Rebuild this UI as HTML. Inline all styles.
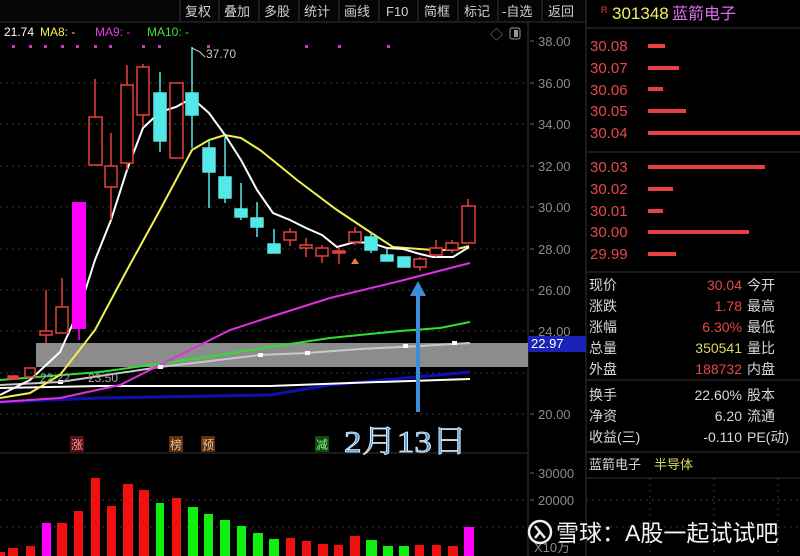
<!DOCTYPE html>
<html><head><meta charset="utf-8"><style>
*{margin:0;padding:0}
body{width:800px;height:556px;background:#000;overflow:hidden;position:relative;font-family:"Liberation Sans","Noto Sans CJK SC",sans-serif}
</style></head><body>
<svg width="800" height="556" style="position:absolute;left:0;top:0" font-family="Liberation Sans, Noto Sans CJK SC, sans-serif">
<rect x="0" y="0" width="586" height="22" fill="#050505"/>
<g fill="#cfcfcf" font-size="13">
<text x="185" y="16">复权</text><text x="224" y="16">叠加</text><text x="264" y="16">多股</text><text x="304" y="16">统计</text><text x="344" y="16">画线</text><text x="386" y="16">F10</text><text x="424" y="16">简框</text><text x="464" y="16">标记</text><text x="502" y="16">-自选</text><text x="548" y="16">返回</text>
</g>
<g stroke="#333" stroke-width="1">
<line x1="180" y1="0" x2="180" y2="22"/><line x1="219" y1="0" x2="219" y2="22"/><line x1="259" y1="0" x2="259" y2="22"/><line x1="299" y1="0" x2="299" y2="22"/><line x1="339" y1="0" x2="339" y2="22"/><line x1="379" y1="0" x2="379" y2="22"/><line x1="418" y1="0" x2="418" y2="22"/><line x1="458" y1="0" x2="458" y2="22"/><line x1="498" y1="0" x2="498" y2="22"/><line x1="542" y1="0" x2="542" y2="22"/>
<line x1="0" y1="22" x2="586" y2="22"/>
<line x1="528" y1="22" x2="528" y2="556"/>
<line x1="586" y1="0" x2="586" y2="556"/>
<line x1="0" y1="453" x2="528" y2="453"/>
<line x1="586" y1="28" x2="800" y2="28"/><line x1="586" y1="152" x2="800" y2="152"/><line x1="586" y1="272" x2="800" y2="272"/><line x1="586" y1="380" x2="800" y2="380"/><line x1="586" y1="452" x2="800" y2="452"/><line x1="586" y1="478" x2="800" y2="478"/>
</g>
<g stroke="#3a3a3a" stroke-dasharray="2,4">
<line x1="0" y1="83" x2="528" y2="83"/><line x1="0" y1="124" x2="528" y2="124"/><line x1="0" y1="166" x2="528" y2="166"/><line x1="0" y1="207" x2="528" y2="207"/><line x1="0" y1="249" x2="528" y2="249"/><line x1="0" y1="290" x2="528" y2="290"/><line x1="0" y1="331" x2="528" y2="331"/><line x1="0" y1="373" x2="528" y2="373"/><line x1="0" y1="414" x2="528" y2="414"/>
<line x1="0" y1="500" x2="528" y2="500"/><line x1="0" y1="527" x2="528" y2="527"/>
<line x1="586" y1="500" x2="800" y2="500"/><line x1="586" y1="527" x2="800" y2="527"/>
<line x1="650" y1="478" x2="650" y2="556"/><line x1="714" y1="478" x2="714" y2="556"/><line x1="778" y1="478" x2="778" y2="556"/>
</g>
<g fill="#8a8a8a" font-size="13">
<text x="538" y="46">38.00</text><text x="538" y="88">36.00</text><text x="538" y="129">34.00</text><text x="538" y="171">32.00</text><text x="538" y="212">30.00</text><text x="538" y="254">28.00</text><text x="538" y="295">26.00</text><text x="538" y="336">24.00</text><text x="538" y="419">20.00</text>
<text x="538" y="478">30000</text><text x="538" y="505">20000</text><text x="534" y="552">X10万</text>
</g>
<g stroke="#666"><line x1="530" y1="41" x2="534" y2="41"/><line x1="530" y1="83" x2="534" y2="83"/><line x1="530" y1="124" x2="534" y2="124"/><line x1="530" y1="166" x2="534" y2="166"/><line x1="530" y1="207" x2="534" y2="207"/><line x1="530" y1="249" x2="534" y2="249"/><line x1="530" y1="290" x2="534" y2="290"/><line x1="530" y1="331" x2="534" y2="331"/><line x1="530" y1="414" x2="534" y2="414"/><line x1="530" y1="473" x2="534" y2="473"/><line x1="530" y1="500" x2="534" y2="500"/></g>
<rect x="36" y="343" width="492" height="24" fill="#8c8c8c"/>
<rect x="528" y="336" width="58" height="16" fill="#1a22b8"/>
<text x="531" y="348" fill="#fff" font-size="13">22.97</text>
<text x="4" y="36" font-size="12" fill="#fff">21.74</text>
<text x="40" y="36" font-size="12" fill="#f0f050">MA8: -</text>
<text x="95" y="36" font-size="12" fill="#e040e0">MA9: -</text>
<text x="147" y="36" font-size="12" fill="#40e040">MA10: -</text>
<g fill="#c040c0"><rect x="12" y="45" width="3" height="3"/><rect x="29" y="45" width="3" height="3"/><rect x="44" y="45" width="3" height="3"/><rect x="61" y="45" width="3" height="3"/><rect x="76" y="45" width="3" height="3"/><rect x="94" y="45" width="3" height="3"/><rect x="109" y="45" width="3" height="3"/><rect x="142" y="45" width="3" height="3"/><rect x="158" y="45" width="3" height="3"/><rect x="207" y="45" width="3" height="3"/><rect x="305" y="45" width="3" height="3"/><rect x="338" y="45" width="3" height="3"/><rect x="387" y="45" width="3" height="3"/></g>
<text x="490" y="39" font-size="13" fill="#888">◇</text>
<rect x="510" y="28" width="10" height="11" fill="none" stroke="#999" rx="2"/><rect x="514" y="30" width="4" height="7" fill="#999"/>
<polyline fill="none" stroke="#1010b0" stroke-width="3" points="0,402 100,398 270,395 330,385 470,372"/>
<polyline fill="none" stroke="#fff" stroke-width="2" points="0,388 100,386 270,386 350,383 470,379"/>
<polyline fill="none" stroke="#c8c8c8" stroke-width="2" points="0,385 60,382 160,367 260,355 307,353 360,349 420,346 470,343"/>
<polyline fill="none" stroke="#30e030" stroke-width="2" points="0,380 100,372 200,358 270,347 330,338 400,331 440,328 470,322"/>
<polyline fill="none" stroke="#e030e0" stroke-width="2" points="0,402 60,398 120,385 180,355 230,330 270,317 330,298 400,281 470,263"/>
<polyline fill="none" stroke="#f0f050" stroke-width="2" points="0,398 30,393 60,375 95,330 127,270 160,210 192,150 209,140 225,135 241,138 260,150 275,162 297,180 337,210 370,232 393,247 433,250 453,250 469,246"/>
<polyline fill="none" stroke="#fff" stroke-width="2" points="0,395 30,380 60,352 79,310 95,260 111,220 127,170 143,128 160,112 176,107 192,98 209,113 225,135 241,160 257,190 273,213 290,220 306,228 322,235 337,247 355,242 371,243 387,248 403,249 420,254 433,257 453,257 469,247"/>
<g fill="#fff"><rect x="58" y="380" width="5" height="4"/><rect x="158" y="365" width="5" height="4"/><rect x="258" y="353" width="5" height="4"/><rect x="305" y="351" width="5" height="4"/><rect x="403" y="344" width="5" height="4"/><rect x="452" y="341" width="5" height="4"/></g>
<text x="40" y="382" font-size="12" fill="#aaa">22.22</text><text x="88" y="382" font-size="12" fill="#aaa">23.50</text>
<g stroke="#e8413c" stroke-width="1.5" fill="none">
<rect x="8" y="376" width="10" height="3" fill="#e8413c"/>
<rect x="25" y="368" width="10" height="9"/>
<line x1="46" y1="290" x2="46" y2="343"/><rect x="40" y="331" width="12" height="4" fill="#000"/>
<line x1="62" y1="278" x2="62" y2="307"/><rect x="56" y="307" width="12" height="26"/>
<line x1="95" y1="79" x2="95" y2="117"/><rect x="89" y="117" width="13" height="48"/>
<line x1="111" y1="133" x2="111" y2="220"/><rect x="105" y="166" width="12" height="21" fill="#000"/>
<line x1="127" y1="65" x2="127" y2="170"/><rect x="121" y="85" width="12" height="78" fill="#000"/>
<line x1="143" y1="64" x2="143" y2="127"/><rect x="137" y="67" width="12" height="48" fill="#000"/>
<rect x="170" y="83" width="13" height="75"/>
<line x1="290" y1="228" x2="290" y2="246"/><rect x="284" y="232" width="12" height="8" fill="#000"/>
<line x1="306" y1="238" x2="306" y2="257"/><rect x="300" y="245" width="12" height="3" fill="#000"/>
<line x1="322" y1="245" x2="322" y2="263"/><rect x="316" y="248" width="12" height="8" fill="#000"/>
<line x1="339" y1="247" x2="339" y2="264"/><rect x="333" y="251" width="12" height="2" fill="#e8413c"/>
<line x1="355" y1="227" x2="355" y2="245"/><rect x="349" y="232" width="12" height="10" fill="#000"/>
<line x1="420" y1="257" x2="420" y2="271"/><rect x="414" y="259" width="12" height="8" fill="#000"/>
<line x1="436" y1="240" x2="436" y2="257"/><rect x="430" y="248" width="12" height="7" fill="#000"/>
<line x1="452" y1="240" x2="452" y2="253"/><rect x="446" y="243" width="12" height="7" fill="#000"/>
<line x1="468" y1="199" x2="468" y2="206"/><rect x="462" y="206" width="13" height="37" fill="#000"/>
</g>
<line x1="79" y1="329" x2="79" y2="340" stroke="#ff00ff" stroke-width="1.5"/>
<rect x="72" y="202" width="14" height="127" fill="#ff00ff"/>
<polygon points="351,264 355,258 359,264" fill="#f08040"/>
<g stroke="#54e8e8" stroke-width="1.5" fill="#54e8e8">
<line x1="160" y1="72" x2="160" y2="152"/><rect x="154" y="93" width="12" height="48"/>
<line x1="192" y1="47" x2="192" y2="148"/><rect x="186" y="93" width="12" height="22"/>
<line x1="209" y1="140" x2="209" y2="208"/><rect x="203" y="148" width="12" height="24"/>
<line x1="225" y1="137" x2="225" y2="203"/><rect x="219" y="177" width="12" height="21"/>
<line x1="241" y1="183" x2="241" y2="220"/><rect x="235" y="209" width="12" height="8"/>
<line x1="257" y1="202" x2="257" y2="237"/><rect x="251" y="218" width="12" height="9"/>
<line x1="274" y1="229" x2="274" y2="253"/><rect x="268" y="244" width="12" height="9"/>
<line x1="371" y1="233" x2="371" y2="253"/><rect x="365" y="237" width="12" height="13"/>
<line x1="387" y1="249" x2="387" y2="261"/><rect x="381" y="255" width="12" height="6"/>
<rect x="398" y="257" width="12" height="10"/>
</g>
<polyline points="192,48 200,52 205,57" fill="none" stroke="#ccc"/>
<text x="206" y="58" font-size="12" fill="#ccc">37.70</text>
<line x1="418" y1="292" x2="418" y2="412" stroke="#3a8fd8" stroke-width="4"/>
<polygon points="410,296 418,281 426,296" fill="#3a8fd8"/>
<rect x="70" y="436" width="14" height="16" fill="#5a1010"/><text x="71" y="449" font-size="12" fill="#f0a0a0">涨</text>
<rect x="169" y="436" width="14" height="16" fill="#5a3010"/><text x="170" y="449" font-size="12" fill="#f0c090">榜</text>
<rect x="201" y="436" width="14" height="16" fill="#5a3010"/><text x="202" y="449" font-size="12" fill="#f0c090">预</text>
<rect x="315" y="436" width="14" height="16" fill="#104a10"/><text x="316" y="449" font-size="12" fill="#90f090">减</text>
<text x="344" y="452" font-size="31" font-family="Liberation Serif, Noto Serif CJK SC, serif" fill="#4a9ee0" stroke="#e8f4ff" stroke-width="0.8" textLength="123" lengthAdjust="spacingAndGlyphs">2月13日</text>
<g fill="#f01010">
<rect x="0" y="552" width="5" height="4"/><rect x="8" y="548" width="10" height="8"/><rect x="26" y="546" width="9" height="10"/><rect x="57" y="523" width="10" height="33"/><rect x="74" y="511" width="9" height="45"/><rect x="91" y="478" width="9" height="78"/><rect x="107" y="506" width="9" height="50"/><rect x="123" y="484" width="10" height="72"/><rect x="139" y="490" width="10" height="66"/><rect x="172" y="498" width="9" height="58"/><rect x="286" y="538" width="9" height="18"/><rect x="302" y="541" width="9" height="15"/><rect x="318" y="544" width="10" height="12"/><rect x="334" y="545" width="9" height="11"/><rect x="350" y="536" width="10" height="20"/><rect x="415" y="545" width="9" height="11"/><rect x="432" y="545" width="9" height="11"/><rect x="448" y="546" width="10" height="10"/>
</g>
<g fill="#10f010">
<rect x="156" y="503" width="8" height="53"/><rect x="188" y="507" width="10" height="49"/><rect x="204" y="514" width="9" height="42"/><rect x="220" y="520" width="10" height="36"/><rect x="237" y="526" width="9" height="30"/><rect x="253" y="533" width="10" height="23"/><rect x="269" y="539" width="10" height="17"/><rect x="366" y="540" width="11" height="16"/><rect x="383" y="546" width="10" height="10"/><rect x="399" y="546" width="10" height="10"/>
</g>
<g fill="#ff00ff"><rect x="42" y="523" width="9" height="33"/><rect x="464" y="527" width="10" height="29"/></g>
<g fill="#e84848" font-size="15">
<text x="590" y="51">30.08</text><text x="590" y="73">30.07</text><text x="590" y="95">30.06</text><text x="590" y="116">30.05</text><text x="590" y="138">30.04</text>
<text x="590" y="172">30.03</text><text x="590" y="194">30.02</text><text x="590" y="216">30.01</text><text x="590" y="237">30.00</text><text x="590" y="259">29.99</text>
</g>
<g fill="#e84040">
<rect x="648" y="44" width="17" height="4"/><rect x="648" y="66" width="31" height="4"/><rect x="648" y="87" width="15" height="4"/><rect x="648" y="109" width="38" height="4"/><rect x="648" y="131" width="152" height="4"/>
<rect x="648" y="165" width="117" height="4"/><rect x="648" y="187" width="25" height="4"/><rect x="648" y="209" width="15" height="4"/><rect x="648" y="230" width="101" height="4"/><rect x="648" y="252" width="28" height="4"/>
</g>
<text x="601" y="13" font-size="9" fill="#e84040">R</text>
<text x="612" y="19" font-size="17" fill="#f0f060">301348</text>
<text x="672" y="19" font-size="16" fill="#e070f0">蓝箭电子</text>
<g font-size="14" fill="#d8d8d8">
<text x="589" y="290">现价</text><text x="589" y="311">涨跌</text><text x="589" y="332">涨幅</text><text x="589" y="353">总量</text><text x="589" y="374">外盘</text>
<text x="589" y="400">换手</text><text x="589" y="421">净资</text><text x="589" y="442">收益(三)</text>
<text x="747" y="290">今开</text><text x="747" y="311">最高</text><text x="747" y="332">最低</text><text x="747" y="353">量比</text><text x="747" y="374">内盘</text>
<text x="747" y="400">股本</text><text x="747" y="421">流通</text><text x="747" y="442">PE(动)</text>
</g>
<g font-size="14" text-anchor="end">
<text x="742" y="290" fill="#e84848">30.04</text><text x="742" y="311" fill="#e84848">1.78</text><text x="742" y="332" fill="#e84848">6.30%</text><text x="742" y="353" fill="#d8d860">350541</text><text x="742" y="374" fill="#e84848">188732</text>
<text x="742" y="400" fill="#d8d8d8">22.60%</text><text x="742" y="421" fill="#d8d8d8">6.20</text><text x="742" y="442" fill="#d8d8d8">-0.110</text>
</g>
<text x="589" y="469" font-size="13" fill="#d8d8d8">蓝箭电子</text>
<text x="654" y="469" font-size="13" fill="#d8d860">半导体</text>
<circle cx="540" cy="532" r="11" fill="none" stroke="#eee" stroke-width="2.5"/>
<path d="M535 526 L545 538 M535 538 L540 532" stroke="#eee" stroke-width="2.5" fill="none"/>
<text x="556" y="541" font-size="23" fill="#f4f4f4">雪球：A股一起试试吧</text>
</svg>
</body></html>
